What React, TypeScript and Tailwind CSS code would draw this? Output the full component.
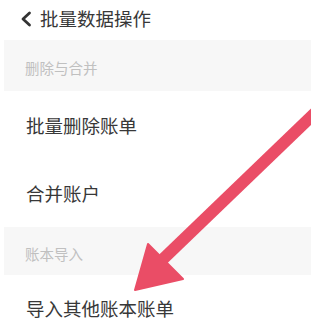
import React from "react";

const font = { fontFamily: '"Noto Sans CJK SC", "Noto Sans", sans-serif' };

export default function App() {
  return (
    <div className="relative w-[311px] h-[333px] overflow-hidden bg-white" style={font}>
      <div className="flex items-center h-[36px] pl-[20px] pt-[1px]">
        <svg width="12" height="16" viewBox="0 0 12 16" className="mr-[8px]">
          <path d="M9.5 2 L3 8 L9.5 14" fill="none" stroke="#333" strokeWidth="2.8" strokeLinecap="round" strokeLinejoin="round" />
        </svg>
        <span className="text-[18.5px] text-[#383838] leading-none">批量数据操作</span>
      </div>
      <div className="h-[4px]" />
      <div className="ml-[4px] h-[51px] bg-[#f7f7f7] flex items-center pl-[21px] pt-[6px]">
        <span className="text-[14.5px] text-[#c0c0c0] leading-none">删除与合并</span>
      </div>
      <div className="h-[68px] flex items-center pl-[26px]">
        <span className="text-[18.5px] text-[#383838] leading-none">批量删除账单</span>
      </div>
      <div className="h-[68px] flex items-center pl-[26px]">
        <span className="text-[18.5px] text-[#383838] leading-none">合并账户</span>
      </div>
      <div className="ml-[4px] h-[48px] bg-[#f7f7f7] flex items-center pl-[21px] pt-[6px]">
        <span className="text-[14.5px] text-[#c0c0c0] leading-none">账本导入</span>
      </div>
      <div className="h-[66px] flex items-center pl-[26px]">
        <span className="text-[18.5px] text-[#383838] leading-none">导入其他账本账单</span>
      </div>
      <svg className="absolute left-0 top-0" width="311" height="333" viewBox="0 0 311 333">
        <line x1="318" y1="110" x2="160" y2="262" stroke="#ea4d66" strokeWidth="12" />
        <polygon points="135,290 148,244 183,279" fill="#ea4d66" stroke="#ea4d66" strokeWidth="2" strokeLinejoin="round" />
      </svg>
    </div>
  );
}
